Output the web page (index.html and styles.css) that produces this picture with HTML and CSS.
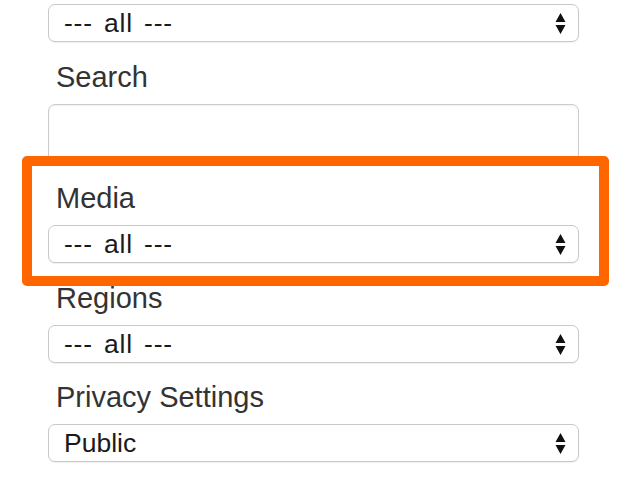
FILE: index.html
```html
<!DOCTYPE html>
<html>
<head>
<meta charset="utf-8">
<link rel="stylesheet" href="styles.css">
</head>
<body>
<form class="filters">
  <div class="group">
    <div class="select"><span class="value dashed">--- all ---</span><svg class="arrows" width="11" height="21" viewBox="0 0 11 21"><path d="M5.5 0 L10.5 9 L0.5 9 Z M0.5 12 L10.5 12 L5.5 21 Z" fill="#111"/></svg></div>
  </div>
  <div class="group">
    <label class="label">Search</label>
    <div class="input"></div>
  </div>
  <div class="group">
    <label class="label">Media</label>
    <div class="select"><span class="value dashed">--- all ---</span><svg class="arrows" width="11" height="21" viewBox="0 0 11 21"><path d="M5.5 0 L10.5 9 L0.5 9 Z M0.5 12 L10.5 12 L5.5 21 Z" fill="#111"/></svg></div>
  </div>
  <div class="group">
    <label class="label">Regions</label>
    <div class="select"><span class="value dashed">--- all ---</span><svg class="arrows" width="11" height="21" viewBox="0 0 11 21"><path d="M5.5 0 L10.5 9 L0.5 9 Z M0.5 12 L10.5 12 L5.5 21 Z" fill="#111"/></svg></div>
  </div>
  <div class="group">
    <label class="label">Privacy Settings</label>
    <div class="select"><span class="value">Public</span><svg class="arrows" width="11" height="21" viewBox="0 0 11 21"><path d="M5.5 0 L10.5 9 L0.5 9 Z M0.5 12 L10.5 12 L5.5 21 Z" fill="#111"/></svg></div>
  </div>
  <div class="highlight"></div>
</form>
</body>
</html>
```
FILE: styles.css
```css
html, body {
  margin: 0;
  padding: 0;
  background: #fff;
  font-family: "Liberation Sans", Arial, sans-serif;
}
.filters {
  position: relative;
  width: 531px;
  padding: 4px 0 0 48px;
  margin: 0;
}
.group {
  margin-bottom: 18.5px;
}
.label {
  display: block;
  padding-left: 8px;
  font-size: 29px;
  line-height: 32px;
  height: 32px;
  color: #333;
  margin-bottom: 11px;
}
.select {
  box-sizing: border-box;
  height: 38px;
  border: 1px solid #c9c9c9;
  border-radius: 7px;
  background: #fff;
  box-shadow: 0 1px 1px rgba(0,0,0,0.06);
  display: flex;
  align-items: center;
  justify-content: space-between;
  padding: 0 12px 0 15px;
}
.value {
  font-size: 26.5px;
  line-height: 36px;
  color: #1a1a1a;
}
.dashed {
  letter-spacing: 0.8px;
  word-spacing: 3px;
}
.arrows {
  display: block;
  margin-top: 1px;
}
.input {
  box-sizing: border-box;
  height: 60px;
  border: 1px solid #cbcbcb;
  border-radius: 7px;
  background: #fff;
  box-shadow: inset 0 1px 2px rgba(0,0,0,0.06);
}
.highlight {
  position: absolute;
  left: 22px;
  top: 156px;
  width: 567px;
  height: 110px;
  border: 10px solid #ff6600;
  border-radius: 5px;
  pointer-events: none;
}
```
